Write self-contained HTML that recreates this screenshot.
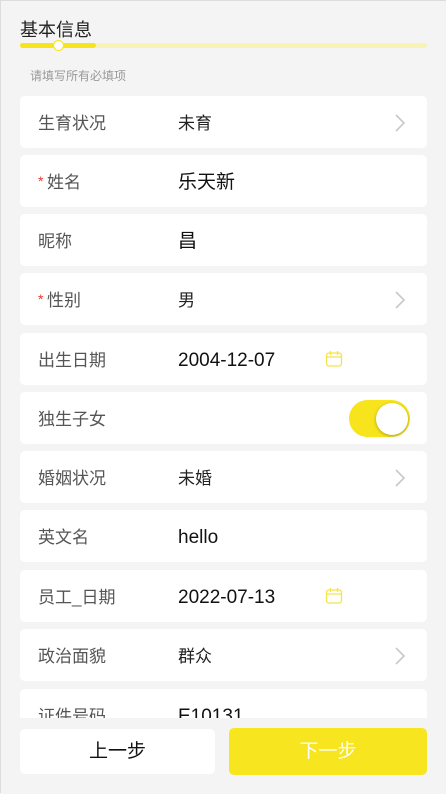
<!DOCTYPE html>
<html><head><meta charset="utf-8"><style>
*{margin:0;padding:0;box-sizing:border-box}
body{width:446px;height:793px;overflow:hidden;background:#f4f4f4;font-family:"Liberation Sans","Noto Sans CJK SC",sans-serif;position:relative;border-left:1px solid #dcdcdc;border-top:1px solid #dcdcdc}
.title{position:absolute;left:19px;top:17px;font-size:18px;color:#222;line-height:24px}
.track{position:absolute;left:19px;top:42px;width:407px;height:5px;border-radius:3px;background:#f8f2b4}
.fill{position:absolute;left:19px;top:42px;width:76px;height:5px;border-radius:3px;background:#f7e41c}
.dot{position:absolute;left:52px;top:39px;width:11px;height:11px;border-radius:50%;background:#fff;border:1.5px solid #f7e41c}
.sub{position:absolute;left:29px;top:66px;font-size:12px;color:#999}
.row{position:absolute;left:19px;width:407px;height:52px;background:#fff;border-radius:5px}
.lb{position:absolute;left:18px;top:2px;line-height:52px;font-size:17px;color:#555}
.lb.req{left:27px}
.st{color:#e33;font-size:14px;position:absolute;left:-9px;top:-2px}
.v{position:absolute;left:158px;top:2px;line-height:52px;font-size:17px;color:#222}
.vi{font-size:19px;color:#111}
.chev{position:absolute;left:373px;top:17px}
.cal{position:absolute;left:305px;top:17px}
.sw{position:absolute;left:329px;top:8px;width:61px;height:37px;border-radius:19px;background:#f7e41c}
.sw i{position:absolute;right:2px;top:3px;width:32px;height:32px;border-radius:50%;background:#fff;box-shadow:0 1px 3px rgba(0,0,0,.3)}
.foot{position:absolute;left:0;top:717px;width:446px;height:76px;background:#f4f4f4}
.b1{position:absolute;left:19px;top:728px;width:195px;height:45px;background:#fff;border-radius:5px;text-align:center;line-height:45px;font-size:19px;color:#111}
.b2{position:absolute;left:228px;top:727px;width:198px;height:47px;background:#f7e51f;border-radius:5px;text-align:center;line-height:47px;font-size:19px;color:#fff}
</style></head><body>
<div class="title">基本信息</div>
<div class="track"></div><div class="fill"></div><div class="dot"></div>
<div class="sub">请填写所有必填项</div>

<div class="row" style="top:95px"><div class="lb">生育状况</div><div class="v">未育</div><svg class="chev" width="14" height="20"><path d="M3 2l8 8-8 8" fill="none" stroke="#c8c8c8" stroke-width="1.6"/></svg></div>
<div class="row" style="top:154px"><div class="lb req"><span class="st">*</span>姓名</div><div class="v vi">乐天新</div></div>
<div class="row" style="top:213px"><div class="lb">昵称</div><div class="v vi">昌</div></div>
<div class="row" style="top:272px"><div class="lb req"><span class="st">*</span>性别</div><div class="v">男</div><svg class="chev" width="14" height="20"><path d="M3 2l8 8-8 8" fill="none" stroke="#c8c8c8" stroke-width="1.6"/></svg></div>
<div class="row" style="top:332px"><div class="lb">出生日期</div><div class="v vi">2004-12-07</div><svg class="cal" width="18" height="18"><rect x="1.5" y="3" width="15" height="13" rx="2.5" fill="none" stroke="#f5e34a" stroke-width="1.3"/><path d="M1.5 7h15M5.5 1v4M12.5 1v4" stroke="#f5e34a" stroke-width="1.3"/></svg></div>
<div class="row" style="top:391px"><div class="lb">独生子女</div><div class="sw"><i></i></div></div>
<div class="row" style="top:450px"><div class="lb">婚姻状况</div><div class="v">未婚</div><svg class="chev" width="14" height="20"><path d="M3 2l8 8-8 8" fill="none" stroke="#c8c8c8" stroke-width="1.6"/></svg></div>
<div class="row" style="top:509px"><div class="lb">英文名</div><div class="v vi">hello</div></div>
<div class="row" style="top:569px"><div class="lb">员工_日期</div><div class="v vi">2022-07-13</div><svg class="cal" width="18" height="18"><rect x="1.5" y="3" width="15" height="13" rx="2.5" fill="none" stroke="#f5e34a" stroke-width="1.3"/><path d="M1.5 7h15M5.5 1v4M12.5 1v4" stroke="#f5e34a" stroke-width="1.3"/></svg></div>
<div class="row" style="top:628px"><div class="lb">政治面貌</div><div class="v">群众</div><svg class="chev" width="14" height="20"><path d="M3 2l8 8-8 8" fill="none" stroke="#c8c8c8" stroke-width="1.6"/></svg></div>
<div class="row" style="top:688px"><div class="lb">证件号码</div><div class="v vi">E10131</div></div>
<div class="foot"></div>
<div class="b1">上一步</div>
<div class="b2">下一步</div>
</body></html>
